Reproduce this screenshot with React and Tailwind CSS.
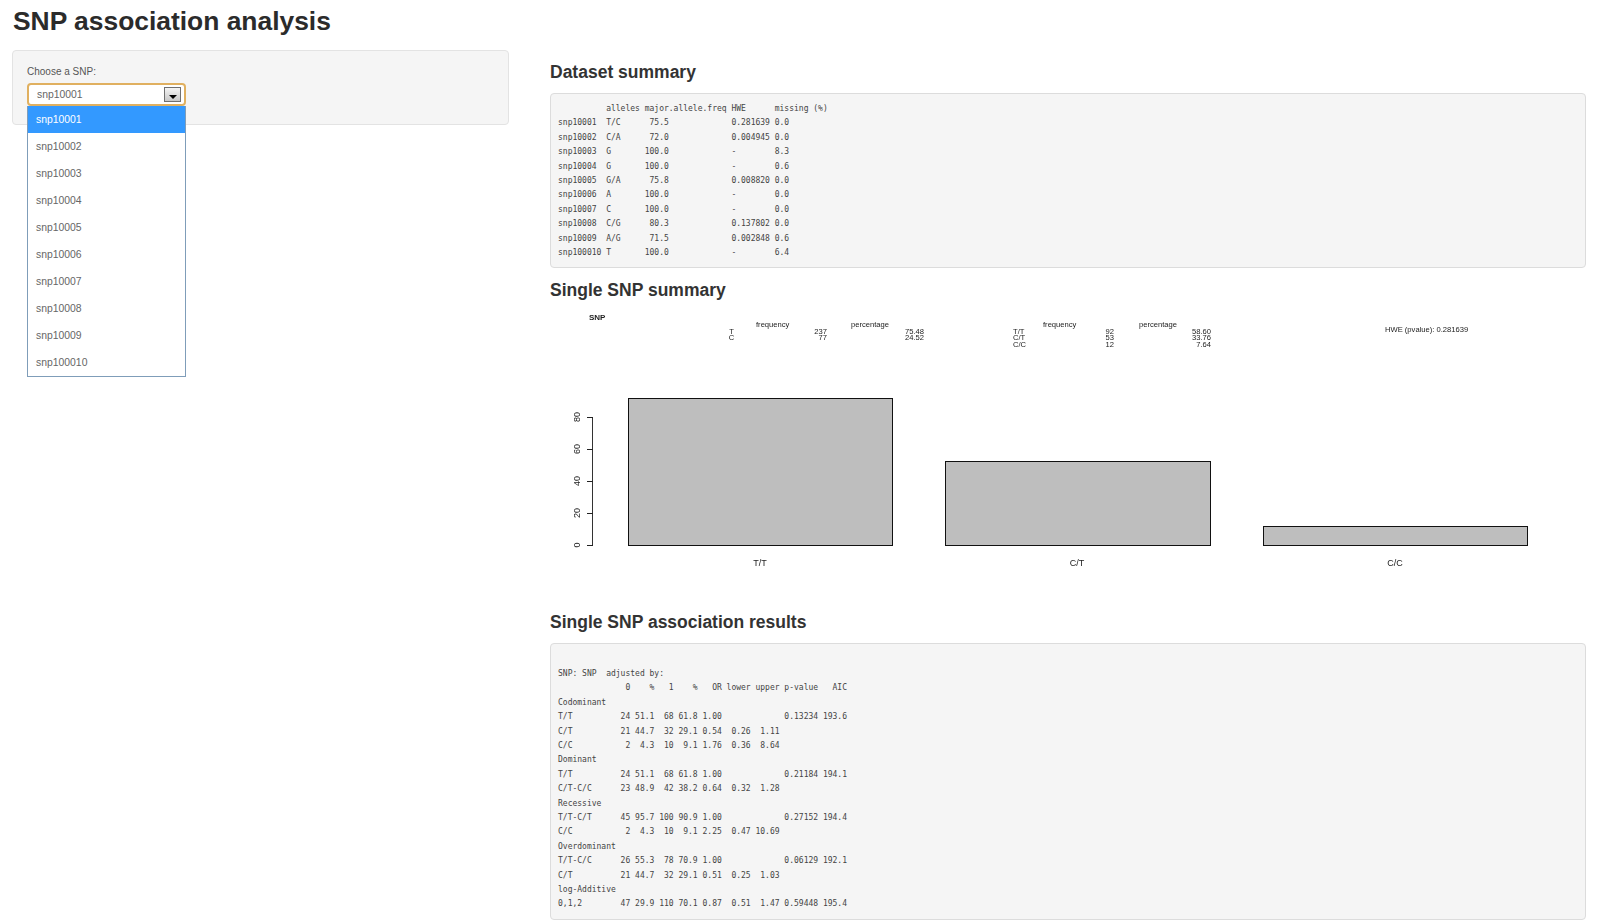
const snps = ["snp10001","snp10002","snp10003","snp10004","snp10005","snp10006","snp10007","snp10008","snp10009","snp100010"];

const dataset = `          alleles major.allele.freq HWE      missing (%)
snp10001  T/C      75.5             0.281639 0.0
snp10002  C/A      72.0             0.004945 0.0
snp10003  G       100.0             -        8.3
snp10004  G       100.0             -        0.6
snp10005  G/A      75.8             0.008820 0.0
snp10006  A       100.0             -        0.0
snp10007  C       100.0             -        0.0
snp10008  C/G      80.3             0.137802 0.0
snp10009  A/G      71.5             0.002848 0.6
snp100010 T       100.0             -        6.4`;

const assoc = `
SNP: SNP  adjusted by:
              0    %   1    %   OR lower upper p-value   AIC
Codominant
T/T          24 51.1  68 61.8 1.00             0.13234 193.6
C/T          21 44.7  32 29.1 0.54  0.26  1.11
C/C           2  4.3  10  9.1 1.76  0.36  8.64
Dominant
T/T          24 51.1  68 61.8 1.00             0.21184 194.1
C/T-C/C      23 48.9  42 38.2 0.64  0.32  1.28
Recessive
T/T-C/T      45 95.7 100 90.9 1.00             0.27152 194.4
C/C           2  4.3  10  9.1 2.25  0.47 10.69
Overdominant
T/T-C/C      26 55.3  78 70.9 1.00             0.06129 192.1
C/T          21 44.7  32 29.1 0.51  0.25  1.03
log-Additive
0,1,2        47 29.9 110 70.1 0.87  0.51  1.47 0.59448 195.4`;

const preCls = "m-0 rounded border border-[#dcdcdc] bg-[#f5f5f5] pt-2 pl-[7px] pr-2 pb-[7px] font-['DejaVu_Sans_Mono',monospace] text-[8px] leading-[14.4px] text-[#444444] whitespace-pre";
const headCls = "m-0 font-['Liberation_Sans',sans-serif] text-[17.5px] leading-[20px] font-bold text-[#333333]";

function Plot() {
  const t = (x, y, s, anchor = "start", extra = {}) => (
    <text x={x} y={y} textAnchor={anchor} fontSize="7.6" fill="#222222" {...extra}>{s}</text>
  );
  const ticks = [[545,"0"],[513,"20"],[481,"40"],[449,"60"],[417,"80"]];
  return (
    <svg viewBox="550 305 1036 290" className="block h-[290px] w-[1036px] blur-[0.3px]" fontFamily="'Liberation Sans', sans-serif">
      {t(589,320,"SNP","start",{fontWeight:"bold",fontSize:8})}
      {t(756,327,"frequency")}
      {t(851,327,"percentage")}
      {t(731.5,334,"T","middle")}
      {t(731.5,340,"C","middle")}
      {t(827,334,"237","end")}
      {t(827,340,"77","end")}
      {t(924,334,"75.48","end")}
      {t(924,340,"24.52","end")}
      {t(1013,334,"T/T")}
      {t(1013,340,"C/T")}
      {t(1013,347,"C/C")}
      {t(1043,327,"frequency")}
      {t(1139,327,"percentage")}
      {t(1114,334,"92","end")}
      {t(1114,340,"53","end")}
      {t(1114,347,"12","end")}
      {t(1211,334,"58.60","end")}
      {t(1211,340,"33.76","end")}
      {t(1211,347,"7.64","end")}
      {t(1385,332,"HWE (pvalue): 0.281639")}

      <rect x="628.5" y="398.5" width="264" height="147" fill="#bebebe" stroke="#111111" />
      <rect x="945.5" y="461.5" width="265" height="84" fill="#bebebe" stroke="#111111" />
      <rect x="1263.5" y="526.5" width="264" height="19" fill="#bebebe" stroke="#111111" />
      <path d="M592.5 417v128" stroke="#333333" fill="none" />
      {ticks.map(([y, s]) => (
        <g key={s}>
          <path d={`M587 ${y + 0.5}h6`} stroke="#222222" />
          <text transform={`translate(580 ${y}) rotate(-90)`} textAnchor="middle" fontSize="9" fill="#222222">{s}</text>
        </g>
      ))}
      {t(760,566,"T/T","middle",{fontSize:9})}
      {t(1077,566,"C/T","middle",{fontSize:9})}
      {t(1395,566,"C/C","middle",{fontSize:9})}
    </svg>
  );
}

export default function App() {
  return (
    <div className="h-[922px] overflow-hidden bg-white pl-[12px] font-['Liberation_Sans',sans-serif] text-[#333333]">
      <h2 className="m-0 pl-[1px] pt-[5px] pb-[13px] text-[26.4px] leading-[32px] font-bold text-[#2b2b2b]">SNP association analysis</h2>
      <div className="flex items-start">
        <div className="h-[75px] w-[497px] shrink-0 rounded border border-[#e3e3e3] bg-[#f5f5f5] px-[14px] pt-[14px]">
          <label className="block text-[10px] leading-[14px] text-[#555555]">Choose a SNP:</label>
          <div className="relative mt-[4px] w-[159px]">
            <div className="flex h-[23px] items-center justify-between rounded-sm border-2 border-[#e0b060] bg-white pl-[8px] pr-[3px] text-[10.4px] text-[#666666]">
              <span>snp10001</span>
              <span className="flex h-[15px] w-[17px] items-center justify-center border border-[#707070] bg-gradient-to-b from-[#f4f4f4] to-[#c8c8c8]">
                <span className="mt-[4px] border-x-[4px] border-t-[4px] border-x-transparent border-t-black" />
              </span>
            </div>
            <ul className="absolute left-0 top-[23px] m-0 w-[159px] list-none border border-t-0 border-[#7f9db9] bg-white p-0">
              {snps.map((s, i) => (
                <li key={s} className={i === 0 ? "flex h-[27px] items-center bg-[#3399ff] pl-[8px] text-[10.4px] text-white" : "flex h-[27px] items-center pl-[8px] text-[10.4px] text-[#666666]"}>{s}</li>
              ))}
            </ul>
          </div>
        </div>
        <div className="ml-[41px] w-[1036px] shrink-0">
          <h3 className={headCls + " pt-[12px] pb-[11px]"}>Dataset summary</h3>
          <pre className={preCls}>{dataset}</pre>
          <h3 className={headCls + " pt-[12px] pb-[5px]"}>Single SNP summary</h3>
          <Plot />
          <h3 className={headCls + " pt-[17px] pb-[11px]"}>Single SNP association results</h3>
          <pre className={preCls}>{assoc}</pre>
        </div>
      </div>
    </div>
  );
}
